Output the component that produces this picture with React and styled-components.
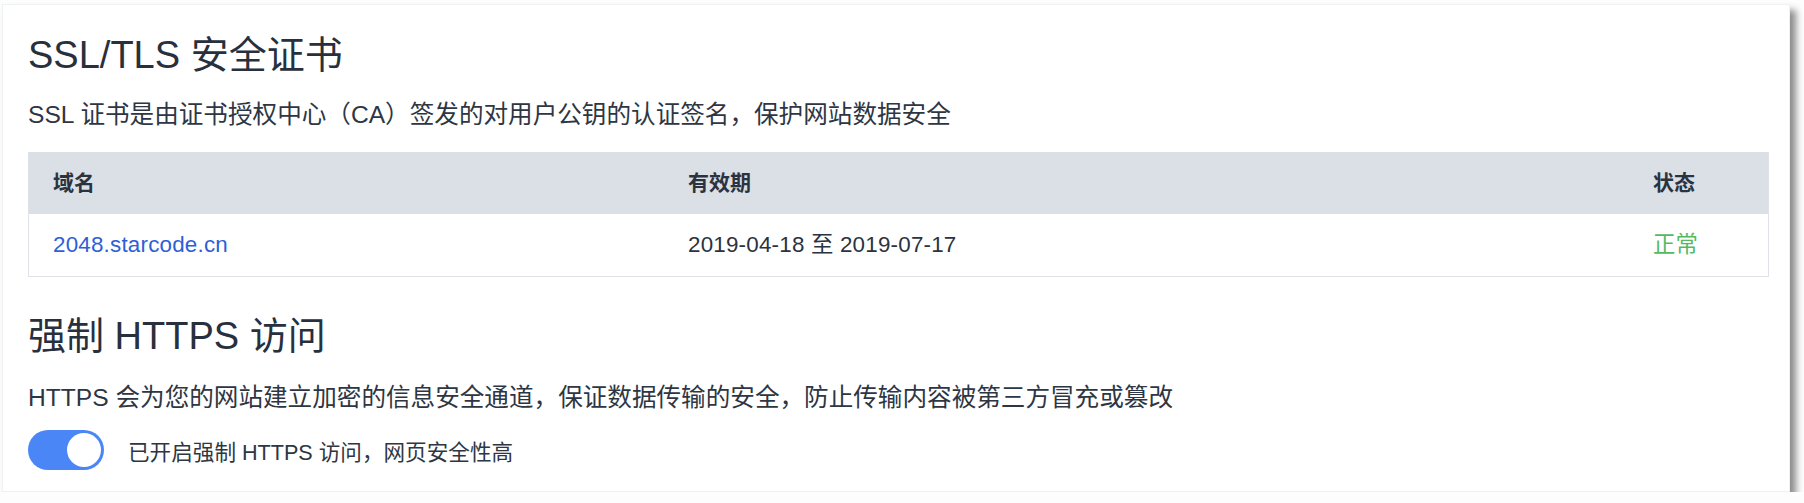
import styled, { createGlobalStyle } from "styled-components";

const Global = createGlobalStyle`
    html, body {
        margin: 0;
        padding: 0;
        background: #fdfdfd;
    }
    body {
        font-family: "Liberation Sans", "Noto Sans CJK SC", sans-serif;
        color: #2b3340;
    }
`;

const Janela = styled.main`
    box-sizing: border-box;
    width: 1788px;
    margin: 4px 0 0 2px;
    padding: 25px 20px 21px 25px;
    background: #fff;
    border: 1px solid #eef2f2;
    box-shadow: 6px 6px 7px rgba(0, 0, 0, 0.45);
`;

const Titulo = styled.h2`
    margin: ${({ top }) => top || "0"} 0 0;
    font-size: 38px;
    line-height: 50px;
    font-weight: 400;
    color: #28303d;
`;

const Descricao = styled.p`
    margin: ${({ top }) => top || "0"} 0 0;
    font-size: 24.6px;
    line-height: 34px;
    color: #2e3643;
`;

const Tabela = styled.div`
    margin-top: 20px;
    border: 1px solid #dfe3e9;
    border-top: none;
`;

const Linha = styled.div`
    display: grid;
    grid-template-columns: 635px 1fr 139px;
    height: 62px;
    align-items: center;
    background: ${({ head }) => (head ? "#dbdfe6" : "#fff")};
`;

const Celula = styled.span`
    padding-left: 24px;
    line-height: 30px;
    font-size: ${({ head }) => (head ? "21px" : "22.4px")};
    font-weight: ${({ head }) => (head ? 700 : 400)};
    letter-spacing: ${({ head }) => (head ? "0" : "0.2px")};
    color: ${({ tone }) =>
        tone === "link" ? "#2d5fd6" : tone === "ok" ? "#55b963" : "#2b3340"};
`;

const Opcao = styled.div`
    display: flex;
    align-items: center;
    gap: 24px;
    margin-top: 15px;
`;

const Chave = styled.button`
    position: relative;
    width: 76px;
    height: 40px;
    padding: 0;
    border: none;
    border-radius: 20px;
    background: #4a86f6;
    cursor: pointer;

    &::after {
        content: "";
        position: absolute;
        top: 3px;
        right: 3px;
        width: 34px;
        height: 34px;
        border-radius: 50%;
        background: #fff;
    }
`;

const Rotulo = styled.span`
    font-size: 21.6px;
    color: #2e3643;
`;

const App = () => (
    <>
        <Global />
        <Janela>
            <Titulo>SSL/TLS 安全证书</Titulo>
            <Descricao top="18px">
                SSL 证书是由证书授权中心（CA）签发的对用户公钥的认证签名，保护网站数据安全
            </Descricao>
            <Tabela>
                <Linha head>
                    <Celula head>域名</Celula>
                    <Celula head>有效期</Celula>
                    <Celula head>状态</Celula>
                </Linha>
                <Linha>
                    <Celula tone="link">2048.starcode.cn</Celula>
                    <Celula>2019-04-18 至 2019-07-17</Celula>
                    <Celula tone="ok">正常</Celula>
                </Linha>
            </Tabela>
            <Titulo top="34px">强制 HTTPS 访问</Titulo>
            <Descricao top="20px">
                HTTPS 会为您的网站建立加密的信息安全通道，保证数据传输的安全，防止传输内容被第三方冒充或篡改
            </Descricao>
            <Opcao>
                <Chave aria-label="强制 HTTPS" />
                <Rotulo>已开启强制 HTTPS 访问，网页安全性高</Rotulo>
            </Opcao>
        </Janela>
    </>
);

export default App;
